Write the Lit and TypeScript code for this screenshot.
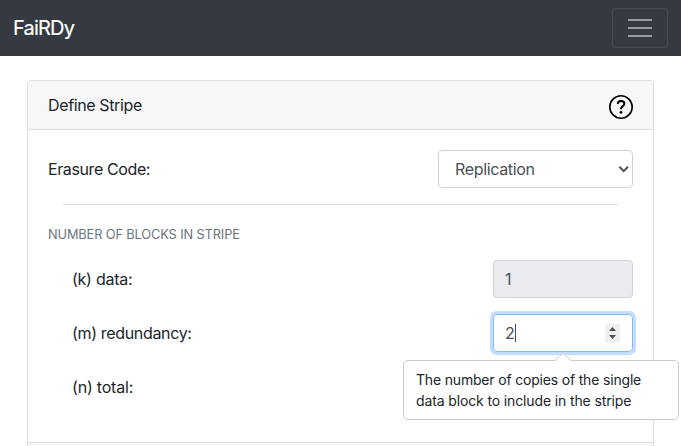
import { LitElement, html, css } from "lit";
import { customElement } from "lit/decorators.js";

@customElement("app-root")
export class AppRoot extends LitElement {
  static styles = css`
    :host {
      display: block;
      position: relative;
      height: 446px;
      overflow: hidden;
      background: #fff;
      color: #212529;
      font: 16px/24px Inter, "Liberation Sans", sans-serif;
    }
    * { box-sizing: border-box; }
    .t { white-space: nowrap; }
    .navbar {
      height: 56px;
      padding: 0 13px;
      display: flex;
      align-items: center;
      justify-content: space-between;
      background: #343a40;
    }
    .brand { color: #fff; font-size: 20px; line-height: 30px; letter-spacing: -0.8px; -webkit-text-stroke: 0.2px #fff; }
    .toggler {
      width: 56px;
      height: 40px;
      display: flex;
      align-items: center;
      justify-content: center;
      border: 1px solid rgba(255, 255, 255, 0.1);
      border-radius: 4px;
      background: none;
      padding: 0;
    }
    svg { display: block; }
    .card {
      margin: 24px 27px 0;
      height: 400px;
      border: 1px solid #dfdfdf;
      border-radius: 4px;
      overflow: hidden;
    }
    .head {
      height: 49px;
      padding: 0 20px;
      display: flex;
      align-items: center;
      justify-content: space-between;
      background: #f7f7f7;
      border-bottom: 1px solid #dfdfdf;
    }
    .head svg { position: relative; top: 2px; }
    .body { height: 312px; padding: 20px 20px 0; }
    .row { height: 38px; display: flex; align-items: center; justify-content: space-between; }
    .select {
      width: 195px;
      height: 38px;
      padding: 0 3px 0 16px;
      display: flex;
      align-items: center;
      justify-content: space-between;
      border: 1px solid #ced4da;
      border-radius: 4px;
      color: #495057;
    }
    .rule { height: 1px; margin: 16px 15px 0; background: #e2e2e2; }
    .caption { margin-top: 20px; font-size: 12.8px; line-height: 20px; color: #6c757d; }
    .fields { display: flex; flex-direction: column; gap: 16px; margin-top: 15px; padding-left: 24px; }
    .input {
      width: 140px;
      height: 38px;
      padding: 0 12px 0 11px;
      display: flex;
      align-items: center;
      border: 1px solid #ced4da;
      border-radius: 4px;
      color: #495057;
    }
    .input.off { background: #e9ebef; }
    .input.focus { border-color: #80bdff; box-shadow: 0 0 0 3px #c4dcff; }
    .caret { width: 1px; height: 18px; background: #495057; }
    .spin { margin-left: auto; }
    .foot { height: 49px; background: #f7f7f7; border-top: 1px solid #dfdfdf; }
    .popover {
      position: absolute;
      left: 403px;
      top: 360px;
      width: 276px;
      height: 60px;
      padding: 8px 12px;
      border: 1px solid #cbcbcb;
      border-radius: 5px;
      background: #fff;
      font-size: 14px;
      line-height: 21px;
    }
    .arrow { position: absolute; left: 151px; top: -9px; }
    .s1 { letter-spacing: -0.37px; }
    .s2 { letter-spacing: -0.39px; }
    .s3 { letter-spacing: -0.35px; }
    .s4 { letter-spacing: -0.12px; }
    .s5 { letter-spacing: -0.25px; }
    .s6 { letter-spacing: -0.34px; }
    .s7 { letter-spacing: -0.2px; }
    .s8 { letter-spacing: -0.18px; }
    .s9 { letter-spacing: -0.13px; }
  `;

  render() {
    return html`
      <nav class="navbar">
        <span class="brand t">FaiRDy</span>
        <button class="toggler" aria-label="Menu">
          <svg width="24" height="20" viewBox="0 0 24 20">
            <path d="M0 2h24M0 10h24M0 18h24" stroke="#999c9f" stroke-width="2" />
          </svg>
        </button>
      </nav>
      <section class="card">
        <header class="head">
          <span class="t s1">Define Stripe</span>
          <svg width="24" height="24" viewBox="0 0 24 24" fill="none" stroke="#000">
            <circle cx="12" cy="12" r="11.2" stroke-width="1.6" />
            <path d="M8.8 8.9C8.8 7 10.2 6 12.1 6c1.9 0 3.2 1.1 3.2 2.7 0 2.4-3.3 2.4-3.3 5v.5" stroke-width="2" />
            <circle cx="12" cy="17.3" r="1.4" fill="#000" stroke="none" />
          </svg>
        </header>
        <div class="body">
          <div class="row">
            <span class="t s2">Erasure Code:</span>
            <div class="select">
              <span class="t s3">Replication</span>
              <svg width="11" height="8" viewBox="0 0 11 8" fill="none" stroke="#495057" stroke-width="2">
                <path d="M1.4 1.8 5.7 6.1 10 1.8" />
              </svg>
            </div>
          </div>
          <div class="rule"></div>
          <div class="caption t s4">NUMBER OF BLOCKS IN STRIPE</div>
          <div class="fields">
            <div class="row">
              <span class="t s5">(k) data:</span>
              <div class="input off">1</div>
            </div>
            <div class="row">
              <span class="t s6">(m) redundancy:</span>
              <div class="input focus">
                <span>2</span><span class="caret"></span>
                <svg class="spin" width="15" height="18" viewBox="0 0 15 18">
                  <path fill="#efefef" d="M0 0h15v18H0z" />
                  <path fill="#4d4d4d" d="M4 7 7.5 3 11 7zM4 11h7l-3.5 4z" />
                </svg>
              </div>
            </div>
            <div class="row"><span class="t s7">(n) total:</span></div>
          </div>
        </div>
        <div class="foot"></div>
      </section>
      <div class="popover" role="tooltip">
        <svg class="arrow" width="16" height="9" viewBox="0 0 16 9">
          <path d="M0 9 8 .8 16 9z" fill="#fff" />
          <path d="M0 8.5 8 .8l8 7.7" fill="none" stroke="#c4c4c4" />
        </svg>
        <div class="t s8">The number of copies of the single</div>
        <div class="t s9">data block to include in the stripe</div>
      </div>
    `;
  }
}
